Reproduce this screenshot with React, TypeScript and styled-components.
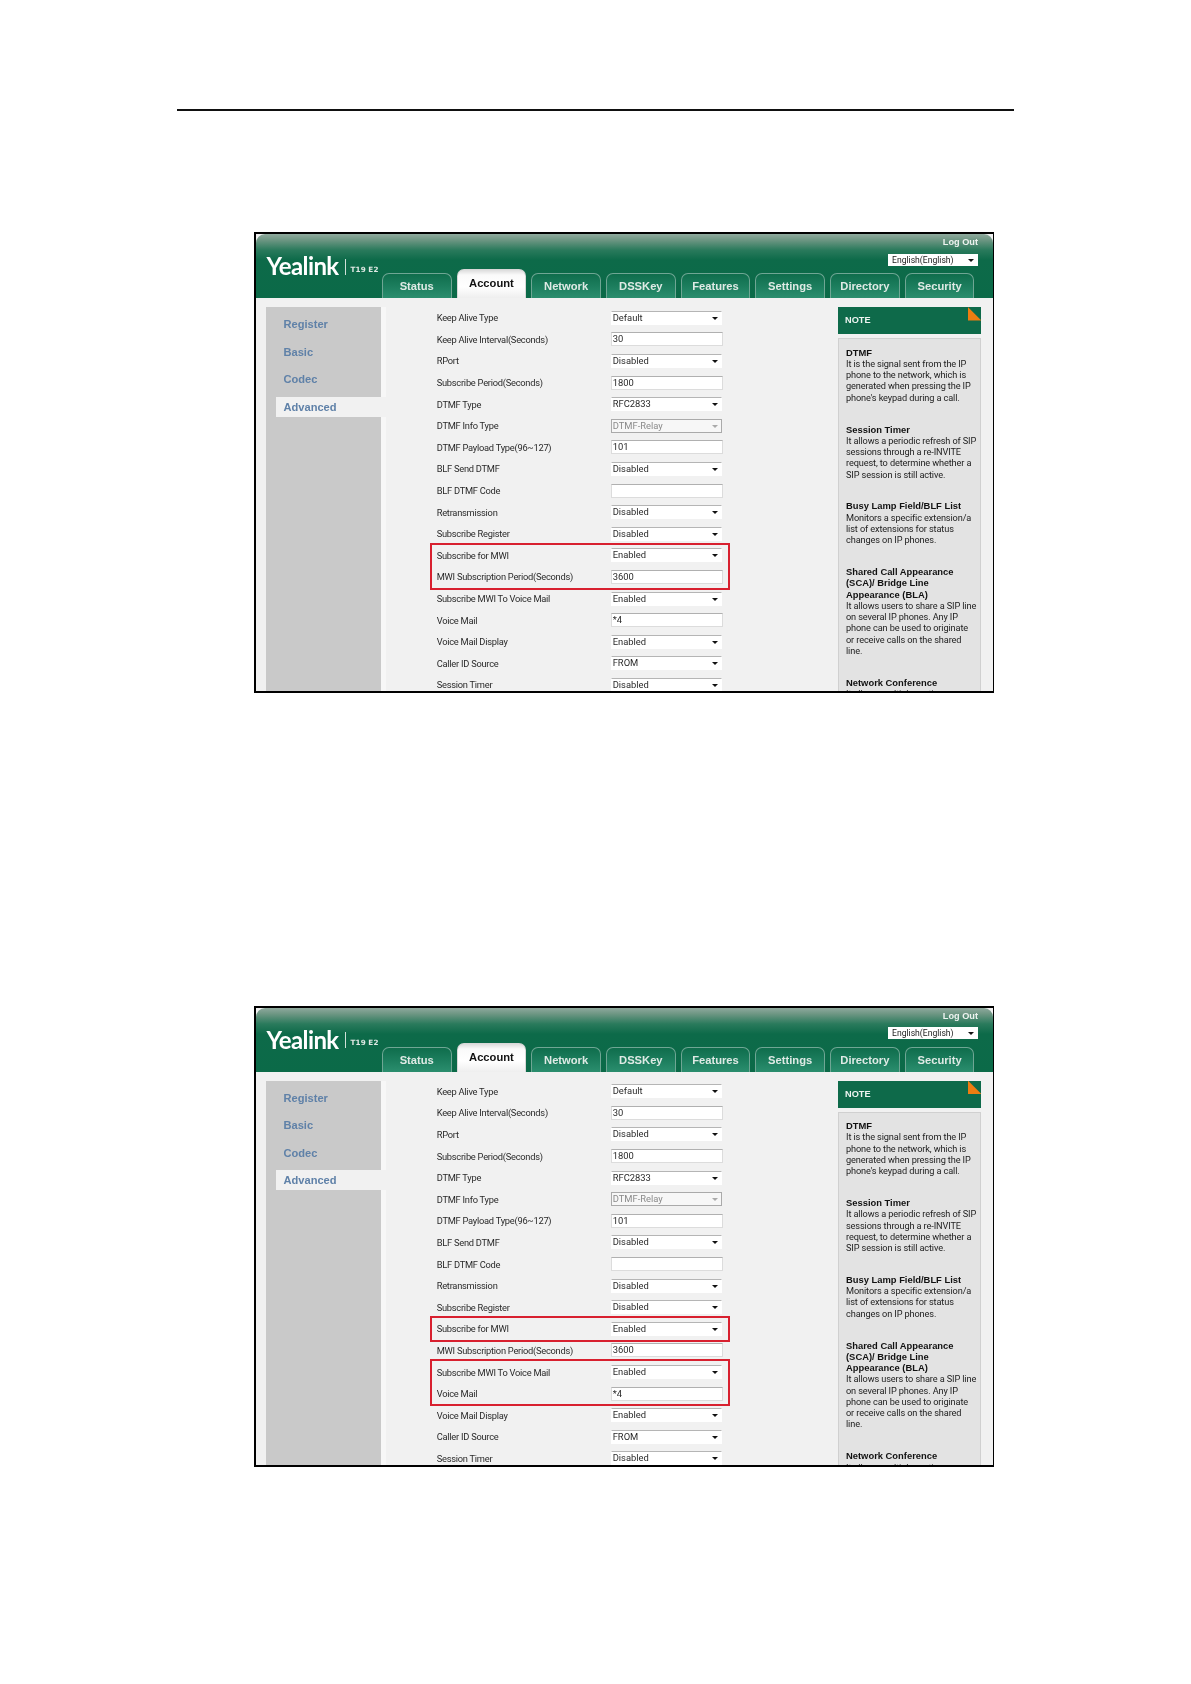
import React from 'react';
import styled, { createGlobalStyle } from 'styled-components';

const GlobalStyle = createGlobalStyle`
  html, body {
    margin: 0;
    padding: 0;
    background: #fff;
  }
`;

const Page = styled.div`
  min-height: 1684px;
  display: flex;
  flex-direction: column;
  font-family: "Liberation Sans", Arial, sans-serif;
`;

const Rule = styled.div`
  margin: 109px 0 0 177px;
  width: 837px;
  height: 1.5px;
  background: #111;
`;

const Frame = styled.div<{ $top: number }>`
  box-sizing: border-box;
  margin: ${p => p.$top}px 0 0 253.5px;
  width: 740px;
  height: 461px;
  border: 2px solid #000;
  border-right-width: 1.5px;
  background: #f1f1f1;
  overflow: hidden;
  filter: blur(0.3px);
`;

const Header = styled.div`
  display: grid;
  grid-template-columns: 126.5px 1fr;
  height: 64px;
  border-radius: 9px 9px 0 0;
  background: linear-gradient(#8fa99d 0, #6d9683 6px, #2a7a5c 16px, #0d6a49 26px, #0b6a48 100%);
`;

const Brand = styled.div`
  display: flex;
  align-items: center;
  height: 41px;
  padding: 11px 0 0 11px;
  color: #fff;
`;

const Wordmark = styled.span`
  font-family: Lato, sans-serif;
  font-size: 24px;
  font-weight: 700;
  letter-spacing: -0.6px;
`;

const Divider = styled.span`
  flex: none;
  width: 1px;
  height: 16px;
  margin: 2px 5px 0 6px;
  background: #cfe0d8;
`;

const Model = styled.span`
  margin-top: 7px;
  font-family: "DejaVu Sans", sans-serif;
  font-size: 7.2px;
  font-weight: 700;
  letter-spacing: 0.1px;
  white-space: nowrap;
  color: #dfe9e4;
`;

const HeaderRight = styled.div`
  display: flex;
  flex-direction: column;
  justify-content: space-between;
  padding-right: 16.5px;
`;

const TopBar = styled.div`
  display: flex;
  flex-direction: column;
  align-items: flex-end;
  margin-right: -2px;
  padding-top: 2px;
`;

const LogOut = styled.span`
  font-size: 9.2px;
  font-weight: 700;
  line-height: 12px;
  color: #edf2ef;
`;

const LanguageSelect = styled.div`
  position: relative;
  box-sizing: border-box;
  width: 90px;
  height: 12px;
  margin-top: 5.5px;
  padding-left: 4px;
  background: #fff;
  font-family: Roboto, sans-serif;
  font-size: 8.6px;
  line-height: 12px;
  color: #222;

  &::after {
    content: '';
    position: absolute;
    right: 4px;
    top: 5px;
    border: 3px solid transparent;
    border-top: 3.2px solid #111;
    border-bottom: 0;
  }
`;

const Tabs = styled.div`
  display: flex;
  align-items: flex-end;
  gap: 5.2px;
`;

const Tab = styled.div<{ $active?: boolean }>`
  box-sizing: border-box;
  width: 69.5px;
  height: ${p => (p.$active ? 29 : 25)}px;
  padding-top: ${p => (p.$active ? 6 : 5)}px;
  border: 1px solid ${p => (p.$active ? '#d8d8d8' : '#6fa694')};
  border-bottom: 0;
  border-radius: 7px 7px 0 0;
  background: ${p =>
    p.$active
      ? 'linear-gradient(#dcdcdc 0, #fafafa 5px, #fff 60%, #eeeeee 100%)'
      : 'linear-gradient(#0f6d4c 0, #1c7d5d 50%, #2b8e6e 100%)'};
  color: ${p => (p.$active ? '#111' : '#dfeae5')};
  font-size: 11.2px;
  font-weight: 700;
  line-height: 14px;
  text-align: center;
`;

const Body = styled.div`
  display: flex;
  height: 393px;
  padding: 9px 0 0 10.5px;
`;

const Sidebar = styled.div`
  box-sizing: border-box;
  flex: none;
  width: 120px;
  padding-top: 7.4px;
  background: #c9c9c9;
  border-right: 5px solid #f7f7f7;
  display: flex;
  flex-direction: column;
  gap: 7.4px;
`;

const SideItem = styled.div<{ $active?: boolean }>`
  height: 20px;
  margin: 0 ${p => (p.$active ? '-5px' : '0')} 0 10px;
  padding-left: 7.5px;
  background: ${p => (p.$active ? '#f1f1f1' : 'transparent')};
  color: #5f81a8;
  font-size: 11.1px;
  font-weight: 700;
  line-height: 20px;
`;

const Form = styled.div`
  flex: none;
  width: 296.5px;
  margin: 0 110px 0 45.5px;
  font-family: Roboto, sans-serif;
`;

const RedBox = styled.div`
  outline: 2px solid #d8202f;
  outline-offset: -0.6px;
`;

const Row = styled.div`
  display: grid;
  grid-template-columns: 174px 112px;
  align-items: center;
  height: 21.6px;
  padding-left: 5.2px;
`;

const Label = styled.span`
  font-size: 9.3px;
  letter-spacing: -0.25px;
  color: #2a2a2a;
  white-space: nowrap;
`;

const SelectBox = styled.div<{ $disabled?: boolean }>`
  position: relative;
  box-sizing: border-box;
  width: 111px;
  height: 14px;
  padding-left: 1px;
  border: 1px solid ${p => (p.$disabled ? '#aaaaaa' : 'transparent')};
  border-top-color: ${p => (p.$disabled ? '#aaaaaa' : '#b5b5b5')};
  background: ${p => (p.$disabled ? '#f7f7f7' : '#fff')};
  color: ${p => (p.$disabled ? '#8a8a8a' : '#2a2a2a')};
  font-size: 9.4px;
  line-height: 12px;

  &::after {
    content: '';
    position: absolute;
    right: 3px;
    top: 5px;
    border: 3px solid transparent;
    border-top: 3.5px solid ${p => (p.$disabled ? '#aaaaaa' : '#111')};
    border-bottom: 0;
  }
`;

const InputBox = styled.div`
  box-sizing: border-box;
  width: 112px;
  height: 14px;
  padding-left: 1px;
  border: 1px solid #dcdcdc;
  border-top-color: #b0b0b0;
  background: #fff;
  color: #2a2a2a;
  font-size: 9.4px;
  line-height: 12px;
`;

const NotePanel = styled.div`
  flex: none;
  width: 143.4px;
  display: flex;
  flex-direction: column;
  gap: 4px;
`;

const NoteHead = styled.div`
  position: relative;
  height: 27.4px;
  padding-left: 7px;
  background: #0e6a4a;
  color: #eef4f1;
  font-size: 9.2px;
  font-weight: 700;
  line-height: 27.4px;

  &::after {
    content: '';
    position: absolute;
    right: 0;
    top: 0;
    width: 13.5px;
    height: 13.5px;
    background: #ee7d11;
    clip-path: polygon(0 0, 100% 100%, 0 100%);
  }
`;

const NoteBody = styled.div`
  box-sizing: border-box;
  flex: 1;
  padding: 7.2px 0 0 7px;
  border: 1px solid #d0d0d0;
  border-bottom: 0;
  background: #e3e3e3;
  color: #222;
  font-family: Roboto, sans-serif;
  font-size: 9.2px;
  letter-spacing: -0.12px;
  line-height: 11.25px;
  white-space: nowrap;
`;

const NoteBlock = styled.div`
  margin-bottom: 20.7px;
`;

const NoteTitle = styled.div`
  font-family: "Liberation Sans", Arial, sans-serif;
  font-size: 9.4px;
  font-weight: 700;
  letter-spacing: 0;
  color: #111;
`;

type Field = { label: string; value: string; kind: 'select' | 'input' | 'disabled' };

const fields: Field[] = [
  { label: 'Keep Alive Type', value: 'Default', kind: 'select' },
  { label: 'Keep Alive Interval(Seconds)', value: '30', kind: 'input' },
  { label: 'RPort', value: 'Disabled', kind: 'select' },
  { label: 'Subscribe Period(Seconds)', value: '1800', kind: 'input' },
  { label: 'DTMF Type', value: 'RFC2833', kind: 'select' },
  { label: 'DTMF Info Type', value: 'DTMF-Relay', kind: 'disabled' },
  { label: 'DTMF Payload Type(96~127)', value: '101', kind: 'input' },
  { label: 'BLF Send DTMF', value: 'Disabled', kind: 'select' },
  { label: 'BLF DTMF Code', value: '', kind: 'input' },
  { label: 'Retransmission', value: 'Disabled', kind: 'select' },
  { label: 'Subscribe Register', value: 'Disabled', kind: 'select' },
  { label: 'Subscribe for MWI', value: 'Enabled', kind: 'select' },
  { label: 'MWI Subscription Period(Seconds)', value: '3600', kind: 'input' },
  { label: 'Subscribe MWI To Voice Mail', value: 'Enabled', kind: 'select' },
  { label: 'Voice Mail', value: '*4', kind: 'input' },
  { label: 'Voice Mail Display', value: 'Enabled', kind: 'select' },
  { label: 'Caller ID Source', value: 'FROM', kind: 'select' },
  { label: 'Session Timer', value: 'Disabled', kind: 'select' },
];

const notes = [
  {
    title: ['DTMF'],
    lines: [
      'It is the signal sent from the IP',
      'phone to the network, which is',
      'generated when pressing the IP',
      "phone's keypad during a call.",
    ],
  },
  {
    title: ['Session Timer'],
    lines: [
      'It allows a periodic refresh of SIP',
      'sessions through a re-INVITE',
      'request, to determine whether a',
      'SIP session is still active.',
    ],
  },
  {
    title: ['Busy Lamp Field/BLF List'],
    lines: [
      'Monitors a specific extension/a',
      'list of extensions for status',
      'changes on IP phones.',
    ],
  },
  {
    title: ['Shared Call Appearance', '(SCA)/ Bridge Line', 'Appearance (BLA)'],
    lines: [
      'It allows users to share a SIP line',
      'on several IP phones. Any IP',
      'phone can be used to originate',
      'or receive calls on the shared',
      'line.',
    ],
  },
  {
    title: ['Network Conference'],
    lines: ['It allows multiple parties'],
  },
];

const tabs = ['Status', 'Account', 'Network', 'DSSKey', 'Features', 'Settings', 'Directory', 'Security'];
const sideItems = ['Register', 'Basic', 'Codec', 'Advanced'];

const FieldRow: React.FC<{ field: Field }> = ({ field }) => (
  <Row>
    <Label>{field.label}</Label>
    {field.kind === 'input' ? (
      <InputBox>{field.value}</InputBox>
    ) : (
      <SelectBox $disabled={field.kind === 'disabled'}>{field.value}</SelectBox>
    )}
  </Row>
);

// rows inside a [first, last] range get wrapped in one red box
const FieldList: React.FC<{ boxes: [number, number][] }> = ({ boxes }) => {
  const out: React.ReactNode[] = [];
  let i = 0;
  while (i < fields.length) {
    const box = boxes.find(b => b[0] === i);
    if (box) {
      out.push(
        <RedBox key={i}>
          {fields.slice(box[0], box[1] + 1).map(f => (
            <FieldRow key={f.label} field={f} />
          ))}
        </RedBox>
      );
      i = box[1] + 1;
    } else {
      out.push(<FieldRow key={i} field={fields[i]} />);
      i++;
    }
  }
  return <>{out}</>;
};

const PhoneScreen: React.FC<{ top: number; boxes: [number, number][] }> = ({ top, boxes }) => (
  <Frame $top={top}>
    <Header>
      <Brand>
        <Wordmark>Yealink</Wordmark>
        <Divider />
        <Model>T19 E2</Model>
      </Brand>
      <HeaderRight>
        <TopBar>
          <LogOut>Log Out</LogOut>
          <LanguageSelect>English(English)</LanguageSelect>
        </TopBar>
        <Tabs>
          {tabs.map(t => (
            <Tab key={t} $active={t === 'Account'}>
              {t}
            </Tab>
          ))}
        </Tabs>
      </HeaderRight>
    </Header>
    <Body>
      <Sidebar>
        {sideItems.map(s => (
          <SideItem key={s} $active={s === 'Advanced'}>
            {s}
          </SideItem>
        ))}
      </Sidebar>
      <Form>
        <FieldList boxes={boxes} />
      </Form>
      <NotePanel>
        <NoteHead>NOTE</NoteHead>
        <NoteBody>
          {notes.map(n => (
            <NoteBlock key={n.title[0]}>
              {n.title.map(t => (
                <NoteTitle key={t}>{t}</NoteTitle>
              ))}
              {n.lines.map(l => (
                <div key={l}>{l}</div>
              ))}
            </NoteBlock>
          ))}
        </NoteBody>
      </NotePanel>
    </Body>
  </Frame>
);

const App: React.FC = () => (
  <Page>
    <GlobalStyle />
    <Rule />
    <PhoneScreen top={121.5} boxes={[[11, 12]]} />
    <PhoneScreen top={312.5} boxes={[[11, 11], [13, 14]]} />
  </Page>
);

export default App;
